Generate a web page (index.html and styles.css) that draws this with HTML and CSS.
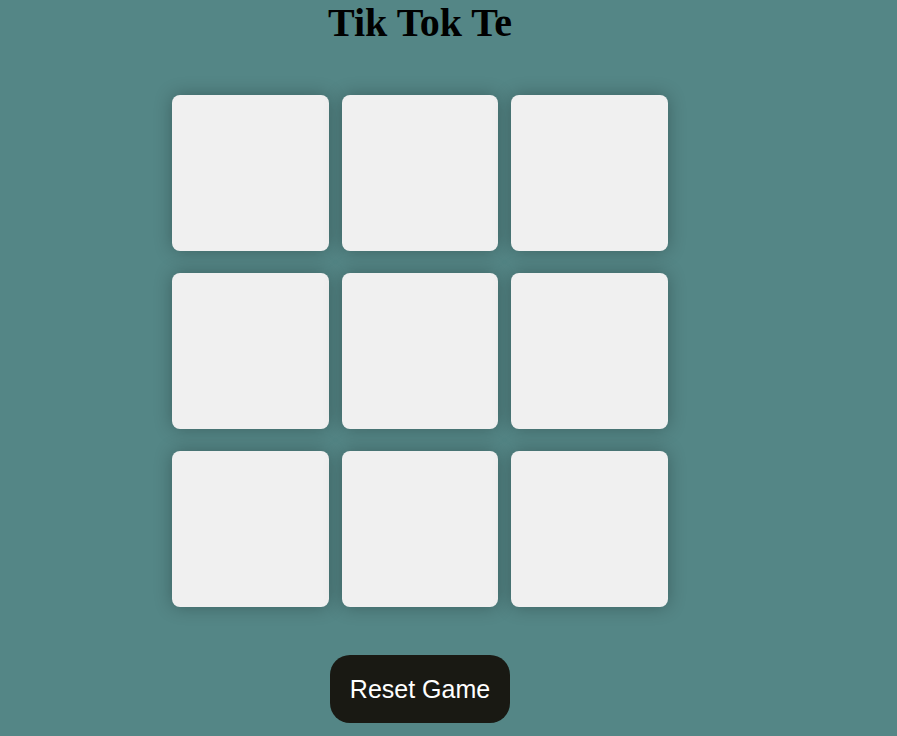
FILE: index.html
```html
<!DOCTYPE html>
<html lang="en">
<head>
<meta charset="utf-8">
<title>Tik Tok Te</title>
<link rel="stylesheet" href="styles.css">
</head>
<body>
<main class="page">
  <h1 class="title">Tik Tok Te</h1>
  <div class="board">
    <button class="cell"></button>
    <button class="cell"></button>
    <button class="cell"></button>
    <button class="cell"></button>
    <button class="cell"></button>
    <button class="cell"></button>
    <button class="cell"></button>
    <button class="cell"></button>
    <button class="cell"></button>
  </div>
  <button class="reset">Reset Game</button>
</main>
</body>
</html>
```
FILE: styles.css
```css
html, body {
  margin: 0;
  padding: 0;
}
body {
  background: #548686;
  width: 897px;
  height: 736px;
  overflow: hidden;
}
.page {
  width: 840px;
  display: flex;
  flex-direction: column;
  align-items: center;
}
.title {
  margin: 0;
  font-family: "Liberation Serif", "Times New Roman", serif;
  font-weight: bold;
  font-size: 40px;
  line-height: 46px;
  color: #000;
}
.board {
  margin-top: 49px;
  display: grid;
  grid-template-columns: 157px 156px 157px;
  grid-auto-rows: 156px;
  column-gap: 13px;
  row-gap: 22px;
}
.cell {
  border: none;
  padding: 0;
  margin: 0;
  background: #f0f0f0;
  border-radius: 8px;
  box-shadow: 0 0 18px rgba(0, 0, 0, 0.28);
}
.reset {
  margin-top: 48px;
  width: 180px;
  height: 68px;
  border: none;
  border-radius: 20px;
  background: #191913;
  color: #fff;
  font-family: "Liberation Sans", Arial, sans-serif;
  font-size: 25px;
  padding: 0;
}
```
